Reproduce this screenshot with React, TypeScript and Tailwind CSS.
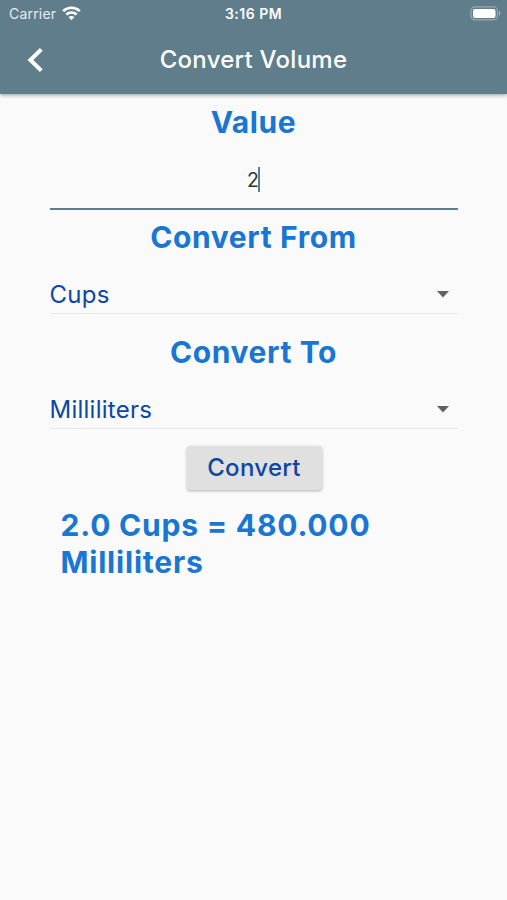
import { useState } from 'react';

const ML_PER_UNIT: Record<string, number> = {
  Milliliters: 1,
  Cups: 240,
  Liters: 1000,
};

const units = Object.keys(ML_PER_UNIT);

function StatusBar() {
  return (
    <div className="flex h-7 items-center justify-between pl-[9px] pr-[6px] text-white">
      <div className="flex flex-1 items-center gap-[6px]">
        <span className="text-[14px] leading-none tracking-[0.2px] text-white/85">Carrier</span>
        <svg className="relative -top-px" width="19" height="15" viewBox="0 0 19 15" fill="none" stroke="white" strokeWidth="2.7">
          <path d="M1.2 5.1C5.8 0.6 13.2 0.6 17.8 5.1" />
          <path d="M4.3 8.5C7.2 5.8 11.8 5.8 14.7 8.5" />
          <path d="M6.5 11.1C8.2 9.6 10.8 9.6 12.5 11.1L9.5 14.2Z" fill="white" stroke="none" />
        </svg>
      </div>
      <span className="mr-[3px] text-[14px] font-semibold leading-none tracking-[0.5px]">3:16 PM</span>
      <div className="flex flex-1 justify-end">
        <svg className="relative -top-px" width="31" height="15" viewBox="0 0 31 15">
          <rect x="1" y="0.9" width="26.5" height="13" rx="4" fill="none" stroke="white" strokeOpacity="0.35" strokeWidth="1.2" />
          <rect x="3" y="2.9" width="22.5" height="9" rx="2" fill="white" />
          <path d="M29 5V9.8C30.8 9 30.8 5.8 29 5Z" fill="white" fillOpacity="0.45" />
        </svg>
      </div>
    </div>
  );
}

function Heading({ children }: { children: string }) {
  return (
    <h2 className="flex h-9 items-center justify-center whitespace-nowrap text-[30px] font-bold tracking-[0.6px] text-[#1976d2]">
      {children}
    </h2>
  );
}

interface UnitSelectProps {
  value: string;
  onChange: (value: string) => void;
}

function UnitSelect({ value, onChange }: UnitSelectProps) {
  return (
    <div className="relative mt-[10px] h-[49px] border-b border-[#e8e8e8]">
      <select
        value={value}
        onChange={(e) => onChange(e.target.value)}
        className="h-full w-full appearance-none bg-transparent pt-[11px] text-[24px] tracking-[0.25px] text-[#0d47a1] outline-none"
      >
        {units.map((unit) => (
          <option key={unit} value={unit}>{unit}</option>
        ))}
      </select>
      <svg className="pointer-events-none absolute right-[9px] top-[26px]" width="12" height="7" viewBox="0 0 12 7">
        <path d="M0 0H12L6 6.4Z" fill="#616161" />
      </svg>
    </div>
  );
}

export default function App() {
  const [from, setFrom] = useState('Cups');
  const [to, setTo] = useState('Milliliters');
  const [result, setResult] = useState('2.0 Cups = 480.000 Milliliters');
  const value = 2;

  const handleConvert = () => {
    const converted = (value * ML_PER_UNIT[from]) / ML_PER_UNIT[to];
    setResult(`${value.toFixed(1)} ${from} = ${converted.toFixed(3)} ${to}`);
  };

  return (
    <div className="min-h-screen w-full bg-[#fafafa] font-['Inter',sans-serif]">
      <header className="h-[94px] bg-[#607d8b] shadow-[0_1px_4px_rgba(0,0,0,0.4)]">
        <StatusBar />
        <div className="grid h-[64px] grid-cols-[70px_1fr_70px] items-center">
          <button className="flex h-full items-center pl-[27px]" aria-label="Back">
            <svg width="17" height="26" viewBox="0 0 17 26" fill="none" stroke="white" strokeWidth="4">
              <path d="M14.3 2.4L3.4 13L14.3 23.6" />
            </svg>
          </button>
          <h1 className="text-center text-[24px] font-medium tracking-[0.25px] text-white">Convert Volume</h1>
        </div>
      </header>

      <main className="mx-auto w-[408px] pt-[10px]">
        <Heading>Value</Heading>
        <div className="mb-[9px] mt-[10px] flex h-[60px] items-center justify-center border-b-2 border-[#607d8b]">
          <span className="pt-[3px] text-[19.5px] text-[#333333]">2</span>
          <span className="-ml-px h-[25px] w-[2px] bg-[#607d8b]" />
        </div>

        <Heading>Convert From</Heading>
        <UnitSelect value={from} onChange={setFrom} />

        <div className="pt-5">
          <Heading>Convert To</Heading>
          <UnitSelect value={to} onChange={setTo} />
        </div>

        <button
          onClick={handleConvert}
          className="ml-[137px] mt-[17px] flex h-[44px] w-[135px] items-center justify-center rounded-[3px] bg-[#e0e0e0] text-[24px] font-medium tracking-[0.3px] text-[#0d47a1] shadow-[0_1px_3px_rgba(0,0,0,0.3)]"
        >
          Convert
        </button>

        <p className="pl-[11px] pt-[17px] text-[30px] font-bold leading-[37px] tracking-[0.8px] text-[#1976d2]">
          {result}
        </p>
      </main>
    </div>
  );
}
